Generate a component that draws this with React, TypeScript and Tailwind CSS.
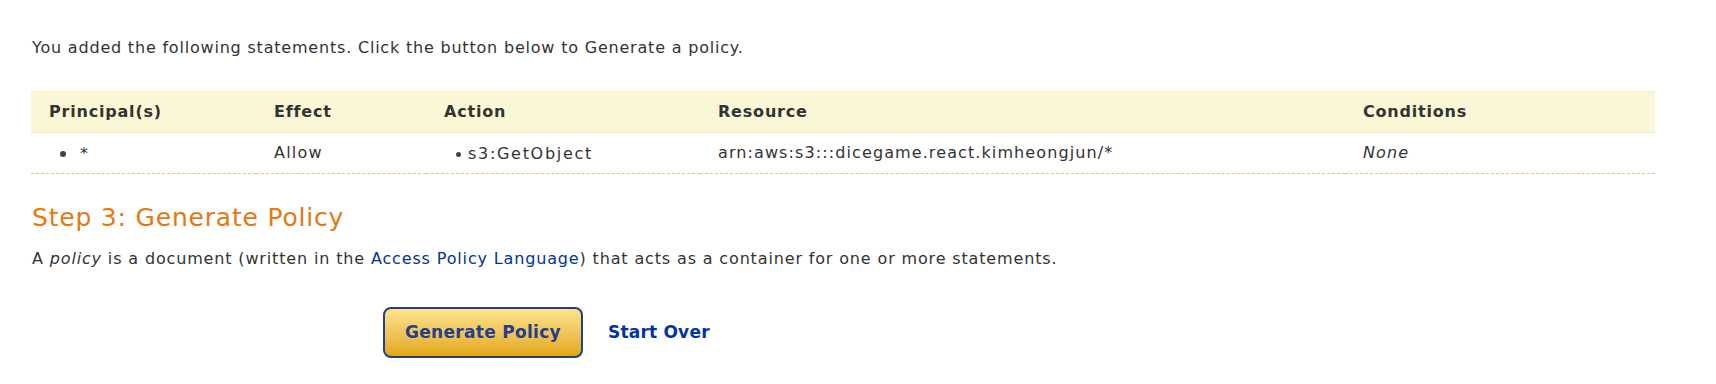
import React from "react";

export default function App() {
  return (
    <div className="w-[1716px] h-[384px] bg-white text-[#333333] overflow-hidden" style={{ fontFamily: '"DejaVu Sans", Verdana, sans-serif' }}>
      <div className="pl-[32px] pr-[61px]">
        <p className="pt-[38px] text-[16px] leading-[20px] tracking-[0.8px]">
          You added the following statements. Click the button below to Generate a policy.
        </p>
        <table className="mt-[33px] -ml-[1px] w-[1624px] border-collapse table-fixed text-[16px]">
          <colgroup>
            <col className="w-[225px]" />
            <col className="w-[170px]" />
            <col className="w-[274px]" />
            <col className="w-[645px]" />
            <col />
          </colgroup>
          <thead>
            <tr className="bg-[#faf7d7] border-t border-t-[#f3efc6] border-b border-b-[#ece8c0] tracking-[0.8px]">
              <th className="h-[41px] pl-[18px] text-left font-bold text-[#333333]">Principal(s)</th>
              <th className="pl-[18px] text-left font-bold text-[#333333]">Effect</th>
              <th className="pl-[18px] text-left font-bold text-[#333333]">Action</th>
              <th className="pl-[18px] text-left font-bold text-[#333333]">Resource</th>
              <th className="pl-[18px] text-left font-bold text-[#333333]">Conditions</th>
            </tr>
          </thead>
          <tbody>
            <tr className="border-b border-dashed border-b-[#c9cf8c]">
              <td className="h-[41px] pl-[29px]">
                <span className="inline-flex items-center gap-[14px]">
                  <span className="inline-block w-[6px] h-[6px] rounded-full bg-[#444444]" />
                  <span>*</span>
                </span>
              </td>
              <td className="pl-[18px] tracking-[1.2px]">Allow</td>
              <td className="pl-[30px]">
                <span className="inline-flex items-center gap-[7px]">
                  <span className="inline-block w-[5px] h-[5px] rounded-full bg-[#444444]" />
                  <span className="tracking-[1.7px]">s3:GetObject</span>
                </span>
              </td>
              <td className="pl-[18px] tracking-[1.1px]">arn:aws:s3:::dicegame.react.kimheongjun/*</td>
              <td className="pl-[18px] italic tracking-[1.1px]">None</td>
            </tr>
          </tbody>
        </table>
        <h2 className="mt-[29px] text-[25px] leading-[30px] tracking-[0.8px] text-[#e47911] font-normal">Step 3: Generate Policy</h2>
        <p className="mt-[16px] text-[16px] leading-[20px] tracking-[0.85px]">
          A <em>policy</em> is a document (written in the{" "}
          <a className="text-[#003399]">Access Policy Language</a>) that acts as a container for one or more statements.
        </p>
        <div className="mt-[38px] pl-[351px] flex items-center gap-[25px]">
          <button className="w-[200px] h-[51px] rounded-[8px] border-2 border-[#1f3f8f] bg-gradient-to-b from-[#fde38d] to-[#e3a800] text-[#24408c] font-bold text-[17px] tracking-[0.3px]">
            Generate Policy
          </button>
          <a className="text-[#0033aa] font-bold text-[17px] tracking-[0.2px]">Start Over</a>
        </div>
      </div>
    </div>
  );
}
